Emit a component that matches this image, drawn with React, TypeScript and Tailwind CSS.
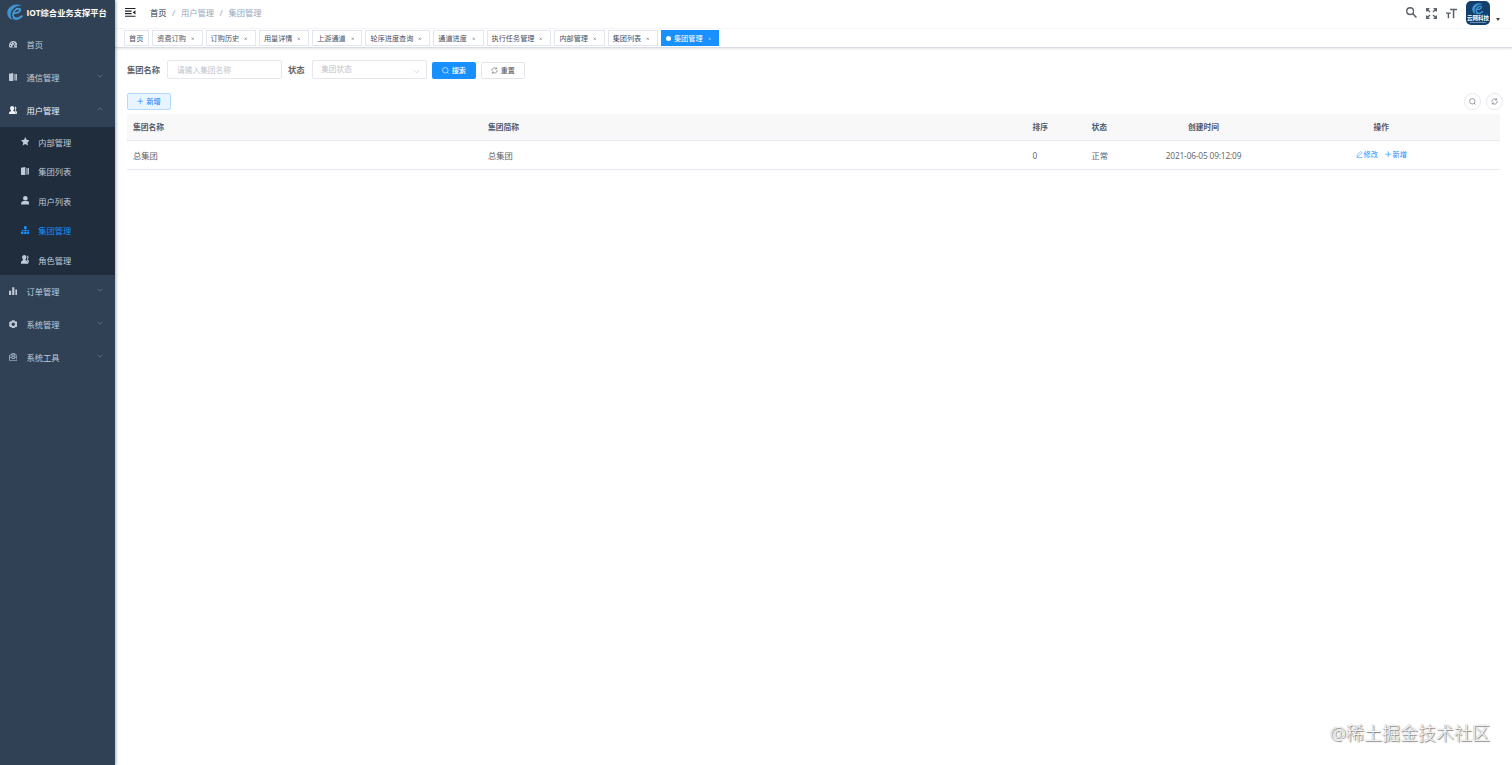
import clsx from 'clsx';
import { ReactNode } from 'react';

type IconName =
  | 'dashboard' | 'book' | 'peoples' | 'star' | 'user' | 'tree'
  | 'chart' | 'gear' | 'toolbox';

interface MenuItem {
  label: string;
  icon: IconName;
  open?: boolean;
  leaf?: boolean;
  children?: { label: string; icon: IconName; active?: boolean }[];
}

const menu: MenuItem[] = [
  { label: '首页', icon: 'dashboard', leaf: true },
  { label: '通信管理', icon: 'book' },
  {
    label: '用户管理',
    icon: 'peoples',
    open: true,
    children: [
      { label: '内部管理', icon: 'star' },
      { label: '集团列表', icon: 'book' },
      { label: '用户列表', icon: 'user' },
      { label: '集团管理', icon: 'tree', active: true },
      { label: '角色管理', icon: 'peoples' },
    ],
  },
  { label: '订单管理', icon: 'chart' },
  { label: '系统管理', icon: 'gear' },
  { label: '系统工具', icon: 'toolbox' },
];

const tabs = [
  { label: '首页', width: 'w-[25.3px]', fixed: true },
  { label: '资费订购', width: 'w-[50.3px]' },
  { label: '订购历史', width: 'w-[50.3px]' },
  { label: '用量详情', width: 'w-[50.3px]' },
  { label: '上游通道', width: 'w-[50.3px]' },
  { label: '轮序进度查询', width: 'w-[64.8px]' },
  { label: '通道进度', width: 'w-[50.3px]' },
  { label: '执行任务管理', width: 'w-[64.8px]' },
  { label: '内部管理', width: 'w-[50.3px]' },
  { label: '集团列表', width: 'w-[50.3px]' },
  { label: '集团管理', width: 'w-[58px]', active: true },
];

const iconShapes: Record<IconName, ReactNode> = {
  dashboard: (
    <path
      fillRule="evenodd"
      d="M8 2a8 8 0 0 0-7 12h14A8 8 0 0 0 8 2Zm0 1.6a1.1 1.1 0 1 1 0 2.2 1.1 1.1 0 0 1 0-2.2ZM4.3 5.2a1.1 1.1 0 1 1 0 2.2 1.1 1.1 0 0 1 0-2.2ZM2.7 9a1.1 1.1 0 1 1 0 2.2 1.1 1.1 0 0 1 0-2.2Zm10.6 0a1.1 1.1 0 1 1 0 2.2 1.1 1.1 0 0 1 0-2.2Zm-2.6-3.6 1.2.7-2.4 4.3A1.9 1.9 0 1 1 8 9.7Z"
    />
  ),
  book: (
    <>
      <path d="M0 1.500 8 0v16l-8-1.500Z" />
      <path d="M9 2h3v12H9Z" opacity=".55" />
      <path d="M12 2h4v12h-4Z" opacity=".9" />
    </>
  ),
  peoples: (
    <>
      <path d="M6 0c2.400 0 4 1.800 4 4.200 0 1.800-.8 3.200-1.800 4v1.200l3.600 1.900c.7.400 1.100 1.100 1.100 1.900V16H0v-2.800c0-.8.300-1.500 1-1.900l2.800-1.900V8.200C2.800 7.400 2 6 2 4.200 2 1.800 3.600 0 6 0Z" />
      <path d="M10.700.8c2 .1 3.200 1.600 3.200 3.500 0 1.600-.6 2.700-1.500 3.400v1.200l2.500 1.700c.7.400 1.100 1 1.100 1.900V15h-2.200c0-2.600-.5-3.400-1.600-4L10.300 10c1.700-2.800 2-6.200.4-9.200Z" />
    </>
  ),
  star: <path d="m8 .2 2.400 5 5.500.8-4 3.900 1 5.600L8 12.900l-4.900 2.600 1-5.600L.1 6l5.500-.8Z" />,
  user: (
    <>
      <circle cx="8" cy="4.200" r="4.200" />
      <path d="M0 15.500C0 11 2.500 9.300 5 9.300h6c2.500 0 5 1.700 5 6.200Z" />
    </>
  ),
  tree: (
    <>
      <path d="M5.600.5h4.800v4.800H5.600ZM0 10.500h4.600v5H0ZM5.700 10.500h4.600v5H5.700ZM11.400 10.500H16v5h-4.600Z" />
      <path d="M7.300 5h1.400v2.300h5.800v3.400h-1.400V8.700H8.700v2H7.300v-2H2.900v2H1.500V7.300h5.800Z" />
    </>
  ),
  chart: <path d="M0 7h4v8.500H0ZM6 .5h4v15H6ZM12 4.500h4v11h-4Z" />,
  gear: (
    <path
      fillRule="evenodd"
      d="M5.800.3h4.400l.6 1.800 1.600.9 2-.4 1.800 3.300L14.900 8l1.300 2.100-1.800 3.300-2-.4-1.600.9-.6 1.800H5.800l-.6-1.800-1.600-.9-2 .4-1.800-3.300L1.100 8-.2 5.900l1.800-3.300 2 .4 1.600-.9ZM8 4.700a3.300 3.300 0 1 0 0 6.600 3.300 3.300 0 0 0 0-6.600Z"
    />
  ),
  toolbox: (
    <g fill="none" stroke="currentColor" strokeWidth="1.400">
      <rect x=".8" y="3.800" width="14.400" height="10.900" rx="1.500" />
      <path d="M5 3.800V1.300h6v2.500M1 8h4m6 0h4M5.500 6.500h5v4h-5Z" />
    </g>
  ),
};

function Icon({ name, className }: { name: IconName; className?: string }) {
  return (
    <svg viewBox="0 0 16 16" fill="currentColor" className={clsx('shrink-0', className)}>
      {iconShapes[name]}
    </svg>
  );
}

function Chevron({ up, className }: { up?: boolean; className?: string }) {
  return (
    <svg viewBox="0 0 12 8" fill="none" stroke="currentColor" className={clsx(up && 'rotate-180', className)}>
      <path d="m1 1.500 5 5 5-5" />
    </svg>
  );
}

function SwirlLogo({ className }: { className?: string }) {
  return (
    <svg viewBox="0 0 32 32" fill="none" className={className}>
      <path d="M28 3C18-2 6 2 2 10c-4 9 0 17 8 20C6 24 6 15 11 10 15 5 22 3 28 3Z" fill="#3c93d0" />
      <path d="M12 17c6 1 13-2 13-6 0-3-6-3-9 0-5 4-6 10-3 14 3 3 10 3 16-3" stroke="#4a9fdb" strokeWidth="3.200" />
      <path d="M9 26c4 6 14 6 21-4-5 4-13 7-21 4Z" fill="#3d97d4" />
    </svg>
  );
}

function SearchIcon({ className }: { className?: string }) {
  return (
    <svg viewBox="0 0 16 16" fill="none" stroke="currentColor" strokeWidth="1.400" className={className}>
      <circle cx="7.500" cy="7.500" r="6.300" />
      <path d="m12 12 3 3" />
    </svg>
  );
}

function RefreshIcon({ className }: { className?: string }) {
  return (
    <svg viewBox="0 0 16 16" fill="none" stroke="currentColor" strokeWidth="1.400" className={className}>
      <path d="M2 9V8a6 6 0 0 1 10.500-4M14 7v1A6 6 0 0 1 3.500 12" />
      <path d="M12.800 1v3.300H9.500M3.200 15v-3.300h3.300" />
    </svg>
  );
}

function PlusIcon({ className }: { className?: string }) {
  return (
    <svg viewBox="0 0 10 10" fill="none" stroke="currentColor" className={className}>
      <path d="M5 .5v9M.5 5h9" />
    </svg>
  );
}

function Sidebar() {
  return (
    <aside className="relative z-10 w-[115px] shrink-0 bg-[#304156] text-[8.270px] text-[#bfcbd9] shadow-[1px_0_3px_rgba(0,21,41,0.35)]">
      <div className="flex h-7 items-center pb-[3px] pl-[7px]">
        <SwirlLogo className="size-[17px] shrink-0" />
        <h1 className="ml-[2.500px] whitespace-nowrap pt-px text-[8.270px] font-bold text-white">IOT综合业务支撑平台</h1>
      </div>
      {menu.map((item) => (
        <div key={item.label}>
          <div className={clsx('flex h-[33px] items-center pl-[8.700px] pr-3', item.open && 'text-[#f4f4f5]')}>
            <Icon name={item.icon} className="mb-px size-[8.500px]" />
            <span className="ml-[9.300px] flex-1 pt-[1.500px]">{item.label}</span>
            {!item.leaf && <Chevron up={item.open} className="mb-[3px] w-[6px] text-[#8c99a9]" />}
          </div>
          {item.children && (
            <div className="bg-[#1f2d3d]">
              {item.children.map((child) => (
                <div
                  key={child.label}
                  className={clsx('flex h-[29.600px] items-center pl-[20.500px] pt-[2px]', child.active && 'text-[#1890ff]')}
                >
                  <Icon name={child.icon} className="mb-[3px] size-[8.700px]" />
                  <span className="ml-[9.100px]">{child.label}</span>
                </div>
              ))}
            </div>
          )}
        </div>
      ))}
    </aside>
  );
}

function Navbar() {
  return (
    <header className="flex h-7 items-center pb-[3px] pl-[10px] pr-3 text-[8.270px]">
      <svg viewBox="0 0 20 16" className="w-[11px] text-[#222]" fill="currentColor">
        <path d="M0 0h19v2H0ZM0 4.700h12v2H0ZM0 9.300h12v2H0ZM0 14h19v2H0ZM19 4v8l-5-4Z" />
      </svg>
      <nav className="ml-[14px] flex items-center pt-px text-[#97a8be]">
        <span className="text-[#303133]">首页</span>
        <span className="mx-[5.500px] font-bold text-[#c0c4cc]">/</span>
        <span>用户管理</span>
        <span className="mx-[5.500px] font-bold text-[#c0c4cc]">/</span>
        <span>集团管理</span>
      </nav>
      <div className="ml-auto flex items-center text-[#5a5e66]">
        <svg viewBox="0 0 16 16" fill="none" stroke="currentColor" strokeWidth="1.900" className="size-[11px]">
          <circle cx="6" cy="6" r="4.900" />
          <path d="m9.500 9.500 5.700 5.700" strokeWidth="2.300" />
        </svg>
        <svg viewBox="0 0 16 16" fill="none" stroke="currentColor" strokeWidth="1.900" className="ml-[9px] mt-px size-[11px]">
          <path d="M1 5V1h4M1 1l4.800 4.800M11 1h4v4M15 1l-4.800 4.800M1 11v4h4M1 15l4.800-4.800M15 11v4h-4M15 15l-4.800-4.800" />
        </svg>
        <svg viewBox="0 0 16 16" fill="currentColor" className="ml-[9px] mt-px size-[11px]">
          <path d="M6 1h10v2.200h-3.900V15H9.900V3.200H6ZM0 6.500h7v1.900H4.500V15h-2V8.400H0Z" />
        </svg>
        <div className="ml-[9.500px] flex h-6 w-6 flex-col items-center overflow-hidden rounded-[5px] bg-[#123f6b]">
          <SwirlLogo className="mt-[2px] size-[12px] shrink-0" />
          <span className="whitespace-nowrap text-[5.500px] font-bold leading-[6px] text-white">云网科技</span>
          <span className="mt-px h-px w-[16px] bg-[#6c8fb2]" />
        </div>
        <span className="ml-[6px] mt-[13px] border-x-[2.500px] border-t-[3px] border-x-transparent border-t-[#444]" />
      </div>
    </header>
  );
}

function TabsBar() {
  return (
    <div className="flex h-5 items-center gap-[3px] border-y border-t-[#f4f5f7] border-b-[#d8dce5] pl-[9px] text-[7.150px] text-[#495060] shadow-[0_1px_2px_rgba(0,0,0,0.1)]">
      {tabs.map((tab) => (
        <div
          key={tab.label}
          className={clsx(
            'flex h-[15.500px] shrink-0 items-center whitespace-nowrap border pl-[4px]',
            tab.width,
            tab.active ? 'border-[#1890ff] bg-[#1890ff] text-white' : 'border-[#e3e6ec] bg-white',
          )}
        >
          {tab.active && <span className="mr-[3px] size-[5px] rounded-full bg-white" />}
          {tab.label}
          {!tab.fixed && (
            <svg viewBox="0 0 6 6" stroke="currentColor" className="ml-[5px] mt-px size-[3.500px] opacity-80">
              <path d="m1 1 4 4M5 1 1 5" />
            </svg>
          )}
        </div>
      ))}
    </div>
  );
}

function FilterForm() {
  return (
    <form className="flex h-[19px] items-center text-[8.270px]">
      <label className="pt-[1.500px] font-bold text-[#606266]">集团名称</label>
      <input
        className="ml-[7px] h-[19px] w-[115px] rounded-[2px] border border-[#e6e8ee] pl-[9px] text-[7.700px] placeholder:text-[#c0c4cc]"
        placeholder="请输入集团名称"
      />
      <label className="ml-[6px] pt-[1.500px] font-bold text-[#606266]">状态</label>
      <div className="ml-[7px] flex h-[19px] w-[115px] items-center justify-between rounded-[2px] border border-[#e6e8ee] pl-[8.500px] pr-[6px] text-[7.700px] text-[#c0c4cc]">
        <span className="pt-px">集团状态</span>
        <Chevron className="mt-[3px] w-[7px]" />
      </div>
      <button type="button" className="ml-[5.500px] mt-px flex h-[17px] w-[43.500px] items-center justify-center gap-[3px] rounded-[2px] bg-[#1890ff] text-[7.100px] font-medium text-white">
        <SearchIcon className="size-[7px]" />
        搜索
      </button>
      <button type="button" className="ml-[5.500px] mt-px flex h-[17px] w-[43.500px] items-center justify-center gap-[3px] rounded-[2px] border border-[#e2e4ea] text-[7.100px] font-medium text-[#606266]">
        <RefreshIcon className="size-[7px]" />
        重置
      </button>
    </form>
  );
}

function GroupTable() {
  return (
    <table className="mt-[4px] w-full table-fixed border-collapse text-left text-[#606266]">
      <colgroup>
        <col className="w-[355px]" />
        <col className="w-[544.500px]" />
        <col className="w-[59px]" />
        <col className="w-[59px]" />
        <col className="w-[118px]" />
        <col />
      </colgroup>
      <thead>
        <tr className="h-[26px] border-b border-[#e6eaf0] bg-[#f8f8f9] text-[7.750px] text-[#515a6e] [&>th]:p-0 [&>th]:pt-[3px] [&>th]:font-bold">
          <th><span className="pl-[6px]">集团名称</span></th>
          <th><span className="pl-[6px]">集团简称</span></th>
          <th><span className="pl-[6px]">排序</span></th>
          <th><span className="pl-[6px]">状态</span></th>
          <th className="text-center">创建时间</th>
          <th className="text-center">操作</th>
        </tr>
      </thead>
      <tbody>
        <tr className="h-[29px] border-b border-[#e6eaf0] text-[8.270px] [&>td]:p-0 [&>td]:pt-[3px]">
          <td><span className="pl-[6px]">总集团</span></td>
          <td><span className="pl-[6px]">总集团</span></td>
          <td><span className="pl-[6px]">0</span></td>
          <td><span className="pl-[6px]">正常</span></td>
          <td className="text-center tracking-[-0.130px]">2021-06-05 09:12:09</td>
          <td>
            <div className="mb-[3px] flex items-center justify-center gap-[7px] text-[7.200px] text-[#1890ff]">
              <span className="flex items-center gap-px">
                <svg viewBox="0 0 14 14" fill="none" stroke="currentColor" className="size-[7px]">
                  <path d="M9.500 1 12 3.500 5 10.500l-3 .5.500-3ZM1 13h12" />
                </svg>
                修改
              </span>
              <span className="flex items-center gap-px">
                <PlusIcon className="size-[6.500px]" />
                新增
              </span>
            </div>
          </td>
        </tr>
      </tbody>
    </table>
  );
}

export default function App() {
  return (
    <div className="flex h-[765px] w-[1512px] overflow-hidden bg-white font-['Open_Sans','Noto_Sans_CJK_SC',sans-serif]">
      <Sidebar />
      <div className="relative min-w-0 flex-1">
        <Navbar />
        <TabsBar />
        <main className="pl-[12px] pr-3 pt-[12px]">
          <FilterForm />
          <div className="mt-[14px] flex h-[17px] items-center justify-between">
            <button type="button" className="flex h-[17px] w-[43.500px] items-center justify-center gap-[3px] rounded-[2px] border border-[#b3dbff] bg-[#e8f4ff] text-[7.100px] font-medium text-[#1890ff]">
              <PlusIcon className="size-[6.500px]" />
              新增
            </button>
            <div className="-mr-[3px] flex gap-[5.500px] text-[#606266]">
              <button type="button" className="flex size-[17px] items-center justify-center rounded-full border border-[#e6e8ee]">
                <SearchIcon className="size-[7px]" />
              </button>
              <button type="button" className="flex size-[17px] items-center justify-center rounded-full border border-[#e6e8ee]">
                <RefreshIcon className="size-[7px]" />
              </button>
            </div>
          </div>
          <GroupTable />
        </main>
        <div className="absolute bottom-[19px] right-[22px] text-[18px] font-light leading-[26px] text-white [text-shadow:0_0_1px_#777,1px_1px_1px_#777]">
          @稀土掘金技术社区
        </div>
      </div>
    </div>
  );
}
